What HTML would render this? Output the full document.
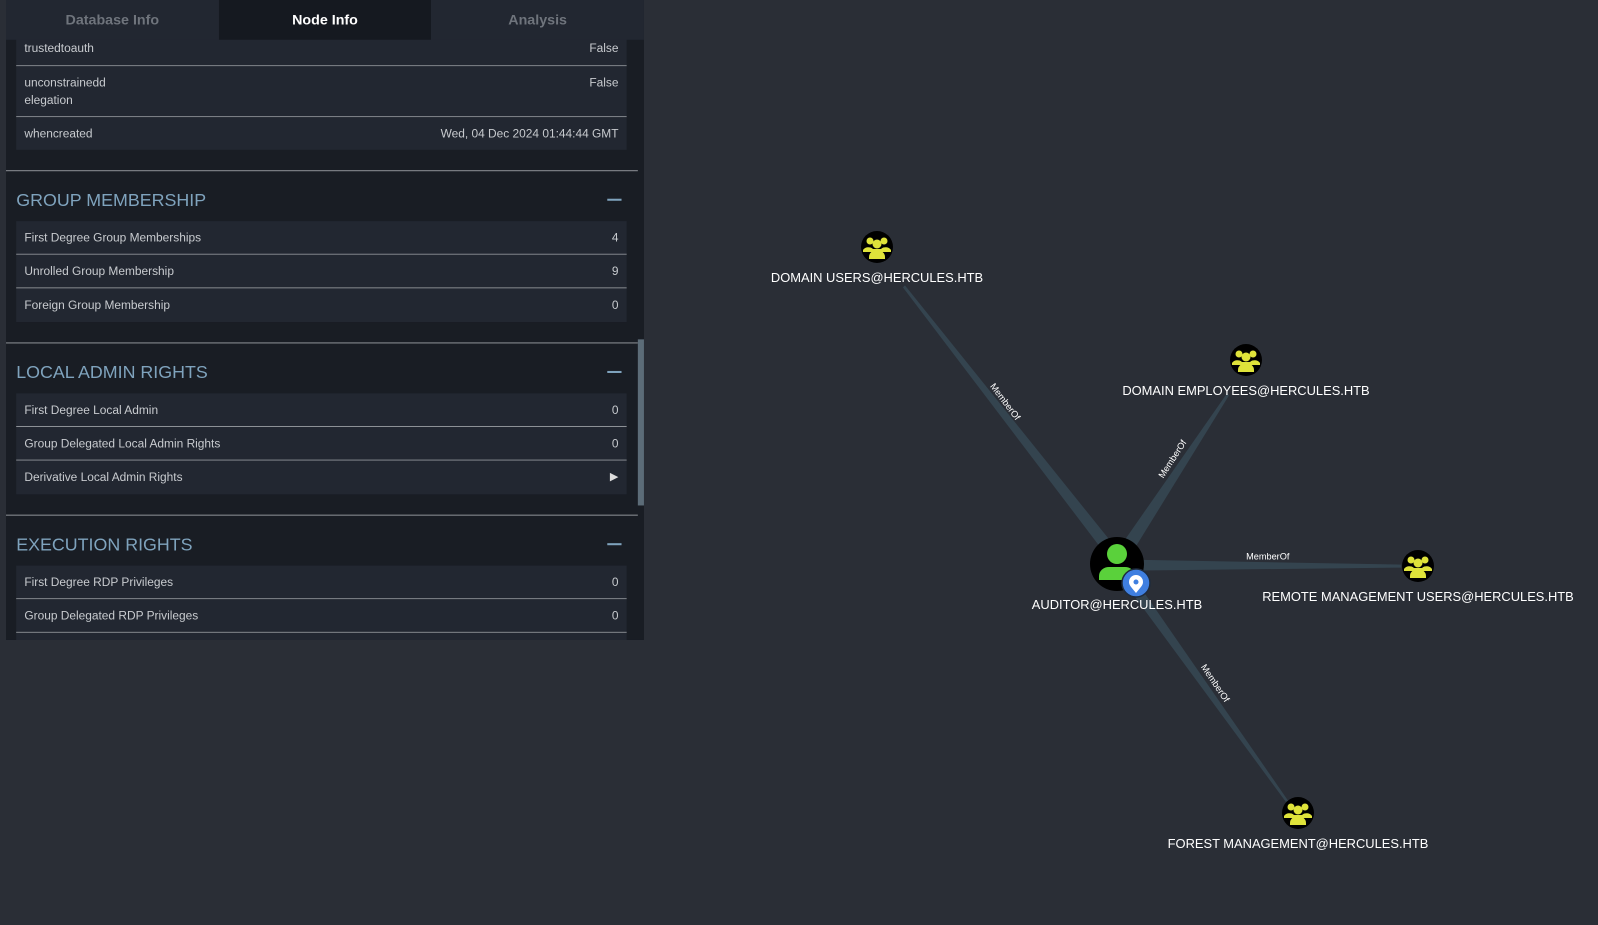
<!DOCTYPE html>
<html><head><style>
*{margin:0;padding:0;box-sizing:border-box}
body{width:1598px;height:925px;background:#2a2e36;font-family:"Liberation Sans",sans-serif;position:relative;overflow:hidden}
#panel{position:absolute;left:6px;top:0;width:626px;height:628px;background:#191d24;overflow:hidden;transform:scale(1.0191);transform-origin:0 0}
.tabs{position:absolute;left:0;top:0;width:626px;height:39px;display:flex;background:#222731;z-index:2}
.tab{flex:1;text-align:center;line-height:39px;font-size:14px;font-weight:bold;color:#6f747c}
.tab.a{background:#151920;color:#fff}
.row{position:absolute;left:10px;width:599px;background:#222731;border-bottom:1px solid #8d9196;font-size:11.7px;color:#c8cbcf;padding:0 8px}
.row .v{position:absolute;right:8px;top:0}
.row .l,.row .v{line-height:17px;top:8px}
.row .l{position:absolute;left:8px}
.hdr{position:absolute;left:10px;font-size:17.5px;color:#7fa3bd}
.min{position:absolute;right:22px;width:14px;height:2px;background:#7fa3bd}
.div{position:absolute;left:0;width:620px;height:1px;background:#8d9196}
.lbl{position:absolute;color:#fff;font-size:12.9px;white-space:nowrap;transform:translateX(-50%)}
</style></head><body>
<div id="panel">
<div class="tabs"><div class="tab">Database Info</div><div class="tab a">Node Info</div><div class="tab">Analysis</div></div>
<div class="row" style="top:31px;height:34px"><span class="l">trustedtoauth</span><span class="v">False</span></div>
<div class="row" style="top:65px;height:50px"><span class="l">unconstrainedd<br>elegation</span><span class="v">False</span></div>
<div class="row" style="top:115px;height:32px;border-bottom:none"><span class="l">whencreated</span><span class="v">Wed, 04 Dec 2024 01:44:44 GMT</span></div>
<div class="div" style="top:167px"></div>
<div class="hdr" style="top:186px">GROUP MEMBERSHIP</div><div class="min" style="top:195px"></div>
<div class="row" style="top:217px;height:33px"><span class="l">First Degree Group Memberships</span><span class="v">4</span></div>
<div class="row" style="top:250px;height:33px"><span class="l">Unrolled Group Membership</span><span class="v">9</span></div>
<div class="row" style="top:283px;height:33px;border-bottom:none"><span class="l">Foreign Group Membership</span><span class="v">0</span></div>
<div class="div" style="top:336px"></div>
<div class="hdr" style="top:355px">LOCAL ADMIN RIGHTS</div><div class="min" style="top:364px"></div>
<div class="row" style="top:386px;height:33px"><span class="l">First Degree Local Admin</span><span class="v">0</span></div>
<div class="row" style="top:419px;height:33px"><span class="l">Group Delegated Local Admin Rights</span><span class="v">0</span></div>
<div class="row" style="top:452px;height:33px;border-bottom:none"><span class="l">Derivative Local Admin Rights</span><span class="v" style="font-size:11px;color:#ddd">&#9654;</span></div>
<div class="div" style="top:505px"></div>
<div class="hdr" style="top:524px">EXECUTION RIGHTS</div><div class="min" style="top:533px"></div>
<div class="row" style="top:555px;height:33px"><span class="l">First Degree RDP Privileges</span><span class="v">0</span></div>
<div class="row" style="top:588px;height:33px"><span class="l">Group Delegated RDP Privileges</span><span class="v">0</span></div>
<div class="row" style="top:621px;height:33px"></div>
<div style="position:absolute;left:620px;top:333px;width:6px;height:163px;background:#5c6c78"></div>
</div>
<svg width="1598" height="925" style="position:absolute;left:0;top:0">
<defs>
<g id="grp"><circle r="16" fill="#000"/>
<circle cx="-7" cy="-6" r="3.5" fill="#dfe33a"/><circle cx="7" cy="-6" r="3.5" fill="#dfe33a"/><circle cx="0" cy="-3" r="4.5" fill="#dfe33a"/>
<path d="M-14 3a6 5 0 0 1 10-1h8a6 5 0 0 1 10 1v2h-28z" fill="#dfe33a"/>
<path d="M-8 10a8 7 0 0 1 16 0v2h-16z" fill="#dfe33a"/></g>
</defs>
<g transform="scale(1.0191)">
<g fill="#34444f">
<polygon points="888,280 886,282 1091,552 1101,545"/>
<polygon points="1206,388 1204,386 1091,548 1103,555"/>
<polygon points="1100,549 1100,560 1375,557 1375,554"/>
<polygon points="1094,559 1103,553 1269,793 1267,794"/>
</g>
<g fill="#fff" font-family="Liberation Sans,sans-serif" font-size="9">
<text transform="translate(984,396) rotate(53)" text-anchor="middle">MemberOf</text>
<text transform="translate(1153,452) rotate(-57)" text-anchor="middle">MemberOf</text>
<text x="1244" y="549" text-anchor="middle">MemberOf</text>
<text transform="translate(1190,672) rotate(56)" text-anchor="middle">MemberOf</text>
</g>
</g>
<use href="#grp" x="877" y="247"/>
<use href="#grp" x="1246" y="360"/>
<use href="#grp" x="1418" y="566"/>
<use href="#grp" x="1298" y="813"/>
<circle cx="1117" cy="564" r="27" fill="#000"/>
<circle cx="1117" cy="554" r="10" fill="#5ad13b"/>
<path d="M1099 580v-4a10 9 0 0 1 10-9h16a10 9 0 0 1 10 9v4z" fill="#5ad13b"/>
<circle cx="1136" cy="583" r="14" fill="#3f7fe0" stroke="#1e2b3d" stroke-width="1.5"/>
<path d="M1136 593c-5-6-7-8-7-11a7 7 0 0 1 14 0c0 3-2 5-7 11z" fill="#fff"/><circle cx="1136" cy="582" r="2.5" fill="#3f7fe0"/>
</svg>
<div class="lbl" style="left:877px;top:270px">DOMAIN USERS@HERCULES.HTB</div>
<div class="lbl" style="left:1246px;top:383px">DOMAIN EMPLOYEES@HERCULES.HTB</div>
<div class="lbl" style="left:1418px;top:589px">REMOTE MANAGEMENT USERS@HERCULES.HTB</div>
<div class="lbl" style="left:1117px;top:597px">AUDITOR@HERCULES.HTB</div>
<div class="lbl" style="left:1298px;top:836px">FOREST MANAGEMENT@HERCULES.HTB</div>
</body></html>
